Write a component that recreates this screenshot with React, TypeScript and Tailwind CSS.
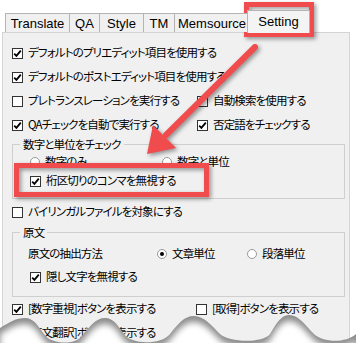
import React from 'react';

const jp = "font-['Noto_Sans_CJK_JP',sans-serif] [font-feature-settings:'palt']";

function CheckBox({ checked }: { checked?: boolean }) {
  return (
    <span className="w-[11px] h-[11px] shrink-0 border border-[#333] bg-white flex items-center justify-center">
      {checked && (
        <svg width="9" height="9" viewBox="0 0 9 9">
          <path d="M1.2 4.6 L3.4 6.8 L7.8 1.6" fill="none" stroke="#000" strokeWidth="1.8" />
        </svg>
      )}
    </span>
  );
}

function Check({ label, checked }: { label: string; checked?: boolean }) {
  return (
    <div className="flex items-center gap-[5px] whitespace-nowrap">
      <CheckBox checked={checked} />
      <span>{label}</span>
    </div>
  );
}

function Radio({ label, selected }: { label: string; selected?: boolean }) {
  return (
    <div className="flex items-center gap-[5px] whitespace-nowrap">
      <span className="w-[10px] h-[10px] shrink-0 rounded-full border border-[#9a9a9a] bg-white flex items-center justify-center">
        {selected && <span className="w-[4px] h-[4px] rounded-full bg-black" />}
      </span>
      <span>{label}</span>
    </div>
  );
}

const tabs = [
  { label: 'Translate', w: 'w-[65px]' },
  { label: 'QA', w: 'w-[31px]' },
  { label: 'Style', w: 'w-[45px]' },
  { label: 'TM', w: 'w-[32px]' },
  { label: 'Memsource', w: 'w-[76px]' },
];

export default function App() {
  return (
    <div className={`relative w-[356px] h-[343px] overflow-hidden bg-white text-[11.5px] tracking-[-0.85px] text-black ${jp}`}>
      <div className="pt-[10px]">
        {/* tab strip */}
        <div className="relative z-10 -mb-px flex items-end h-[23px] pl-[5px] font-['Liberation_Sans',Arial,sans-serif] text-[13px] tracking-normal">
          {tabs.map((t, i) => (
            <div
              key={t.label}
              className={`${t.w} h-[19px] mb-px ${i > 0 ? '-ml-px' : ''} border border-b-0 border-[#b4b4b4] bg-[#f0f0f0] flex items-center justify-center leading-none`}
            >
              {t.label}
            </div>
          ))}
          <div className="w-[63px] h-[23px] -ml-[3px] border border-b-0 border-[#b4b4b4] bg-[#f4f4f4] flex items-center justify-center leading-none pb-[1px]">
            Setting
          </div>
        </div>

        {/* panel */}
        <div className="ml-[2px] w-[348px] h-[320px] border border-[#d4d4d4] bg-[#f0f0f0] pt-[8px] pl-[9px]">
          <div className="h-[24px] flex items-center">
            <Check checked label="デフォルトのプリエディット項目を使用する" />
          </div>
          <div className="h-[24px] flex items-center">
            <Check checked label="デフォルトのポストエディット項目を使用する" />
          </div>
          <div className="h-[24px] grid grid-cols-[185px_1fr] items-center">
            <Check label="プレトランスレーションを実行する" />
            <Check label="自動検索を使用する" />
          </div>
          <div className="h-[24px] grid grid-cols-[185px_1fr] items-center">
            <Check checked label="QAチェックを自動で実行する" />
            <Check checked label="否定語をチェックする" />
          </div>

          <fieldset className="w-[333px] border border-[#cfcfcf] pb-[8px]">
            <legend className="ml-[7px] px-[3px] leading-[14px]">数字と単位をチェック</legend>
            <div className="mt-px h-[20px] grid grid-cols-[132px_1fr] items-center pl-[17px]">
              <Radio label="数字のみ" />
              <Radio label="数字と単位" />
            </div>
            <div className="h-[18px] flex items-center pl-[17px]">
              <Check checked label="桁区切りのコンマを無視する" />
            </div>
          </fieldset>

          <div className="h-[26px] flex items-center">
            <Check label="バイリンガルファイルを対象にする" />
          </div>

          <fieldset className="w-[333px] border border-[#cfcfcf] pb-[8px]">
            <legend className="ml-[7px] px-[3px] leading-[14px]">原文</legend>
            <div className="mt-[3px] h-[24px] grid grid-cols-[129px_90px_1fr] items-center pl-[15px]">
              <span>原文の抽出方法</span>
              <Radio selected label="文章単位" />
              <Radio label="段落単位" />
            </div>
            <div className="h-[22px] flex items-center pl-[17px]">
              <Check checked label="隠し文字を無視する" />
            </div>
          </fieldset>

          <div className="h-[24px] grid grid-cols-[184px_1fr] items-center">
            <Check checked label="[数字重視]ボタンを表示する" />
            <Check label="[取得]ボタンを表示する" />
          </div>
          <div className="h-[24px] flex items-center">
            <Check checked label="[原文翻訳]ボタンを表示する" />
          </div>
        </div>
      </div>

      {/* annotation: highlight boxes */}
      <div className="absolute left-[244px] top-[2px] w-[70px] h-[35px] border-[5px] border-[#f04b4d] drop-shadow-[2px_2px_2px_rgba(0,0,0,0.4)]" />
      <div className="absolute left-[14px] top-[163px] w-[195px] h-[34px] border-[5px] border-[#f04b4d] drop-shadow-[2px_2px_2px_rgba(0,0,0,0.4)]" />

      {/* annotation: arrow */}
      <svg className="absolute inset-0 drop-shadow-[2px_2px_2px_rgba(0,0,0,0.4)]" width="356" height="343" viewBox="0 0 356 343">
        <line x1="255" y1="47" x2="166" y2="135" stroke="#f04b4d" strokeWidth="6" strokeLinecap="round" />
        <polygon points="147,154 153,125 176,148" fill="#f04b4d" />
      </svg>

      {/* torn bottom edge */}
      <svg className="absolute left-0 top-[300px]" width="356" height="43" viewBox="0 300 356 43">
        <defs>
          <filter id="soft" x="-10%" y="-50%" width="120%" height="200%">
            <feGaussianBlur stdDeviation="3" />
          </filter>
        </defs>
        <path
          d="M0,328 C10,322 16,318 25,318 C34,318 38,326 44,334 C50,344 74,346 82,336 C90,326 96,318 105,318 C114,318 118,326 124,334 C130,344 160,346 170,334 C178,324 184,316 194,316 C204,316 212,326 220,334 C228,342 262,344 270,334 C276,324 281,315 289,315 C299,315 306,326 314,334 C322,342 345,344 356,334 L356,343 L0,343 Z"
          fill="#8c8c8c"
        />
        <path
          transform="translate(0,6)"
          filter="url(#soft)"
          d="M0,328 C10,322 16,318 25,318 C34,318 38,326 44,334 C50,344 74,346 82,336 C90,326 96,318 105,318 C114,318 118,326 124,334 C130,344 160,346 170,334 C178,324 184,316 194,316 C204,316 212,326 220,334 C228,342 262,344 270,334 C276,324 281,315 289,315 C299,315 306,326 314,334 C322,342 345,344 356,334 L356,360 L0,360 Z"
          fill="#ffffff"
        />
      </svg>
    </div>
  );
}
